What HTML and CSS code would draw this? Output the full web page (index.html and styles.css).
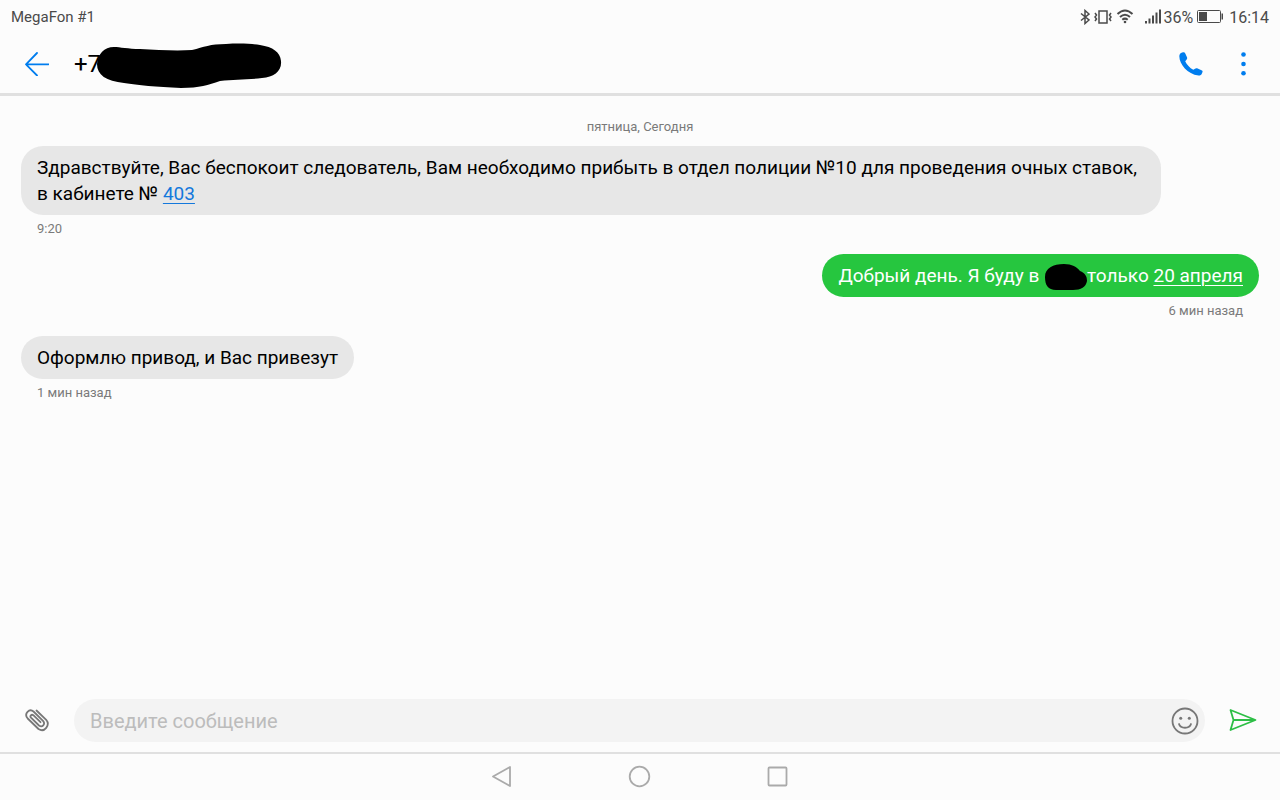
FILE: index.html
```
<!DOCTYPE html>
<html lang="ru">
<head>
  <meta charset="UTF-8">
  <meta name="viewport" content="width=device-width, initial-scale=1.0">
  <title>Сообщения</title>
  <link rel="stylesheet" href="styles.css">
</head>
<body>

  <div class="status-bar">
    <span class="operator">MegaFon #1</span>
    <div class="status-icons">
      <svg class="bluetooth" width="10" height="16" viewBox="0 0 10 16">
        <path d="M1 4.500 L9 11 L5 14.500 V1.500 L9 5 L1 11.500"/>
      </svg>
      <svg class="vibrate" width="18" height="16" viewBox="0 0 18 16">
        <rect x="5" y="2" width="8" height="12"/>
        <path d="M1 4 L2.500 6 L1 8 L2.500 10 L1 12 M17 4 L15.500 6 L17 8 L15.500 10 L17 12"/>
      </svg>
      <svg class="wifi" width="18" height="16" viewBox="0 0 18 16">
        <path d="M1.500 5 Q9 -2 16.500 5 M4 8 Q9 3.500 14 8 M6.300 10.700 Q9 8.500 11.700 10.700"/>
        <circle cx="9" cy="13" r="1.300"/>
      </svg>
      <svg class="signal" width="16" height="16" viewBox="0 0 16 16">
        <path d="M1 12 V14.500 M4.500 9.500 V14.500 M8 6.500 V14.500 M11.500 3.500 V14.500 M15 .5 V14.500"/>
      </svg>
      <span>36%</span>
      <svg class="battery" width="26" height="16" viewBox="0 0 26 16">
        <rect class="battery-case" x=".5" y="1.500" width="23" height="12" rx="1"/>
        <rect x="2" y="3" width="8" height="9"/>
        <rect x="24.500" y="4.500" width="1.500" height="6"/>
      </svg>
      <span>16:14</span>
    </div>
  </div>

  <header>
    <button type="button" class="btn-icon" aria-label="Назад">
      <svg width="24" height="24" viewBox="0 0 24 24">
        <path class="line" d="M12 1 L1 12.300 L12 23.500 M1 12.300 H23.500"/>
      </svg>
    </button>
    <div class="contact">
      <h1>+7</h1>
      <svg class="marker" width="186" height="46" viewBox="0 0 186 46">
        <path d="M1 21 C2 11 8 4 18 4 C24 4 32 6 44 6 C62 7 80 8 96 7 C108 4 114 1 130 1 C146 0 156 1 164 2 C177 4 184 9 185 18 C186 28 178 34 166 35 C150 37 138 36 124 38 C112 42 104 45 85 45 C60 44 42 42 28 40 C10 38 1 32 1 21 Z"/>
      </svg>
    </div>
    <button type="button" class="btn-icon" aria-label="Позвонить">
      <svg width="24" height="24" viewBox="0 0 24 24">
        <path d="M3.200 .5 C4.800 -.2 5.700 .2 6.300 1.400 L8 5.300 C8.400 6.400 8.200 7.200 7.300 7.900 L6.200 9.200 C7.700 12.500 10.800 15.900 14.300 17.700 L16 16.700 C16.700 16.200 17.300 16 18.100 16.300 L22.500 18.200 C23.500 18.600 23.800 19.200 23.500 20 L22.800 21.700 C22.400 22.900 21 23.700 19.500 23.500 C8.500 22 .5 12.500 .3 4.200 C.3 2.300 1.400 1 3.200 .5 Z"/>
      </svg>
    </button>
    <button type="button" class="btn-icon" aria-label="Меню">
      <svg width="24" height="24" viewBox="0 0 24 24">
        <circle cx="12.500" cy="2.500" r="2.300"/>
        <circle cx="12.500" cy="12" r="2.300"/>
        <circle cx="12.500" cy="21.300" r="2.300"/>
      </svg>
    </button>
  </header>

  <main>
    <div class="date">пятница, Сегодня</div>

    <div class="message">
      <p class="bubble">Здравствуйте, Вас беспокоит следователь, Вам необходимо прибыть в отдел полиции №10 для проведения очных ставок, в кабинете № <a href="#">403</a></p>
      <span class="time">9:20</span>
    </div>

    <div class="message sent">
      <p class="bubble">Добрый день. Я буду в <svg class="blot" width="44" height="28" viewBox="0 0 44 28"><path d="M1 14 C1 5 9 1 20 1 C28 1 33 4 36 8 C41 10 43 13 43 18 C42 24 37 27 29 27 H12 C4 27 1 22 1 14 Z"/></svg>только <a href="#">20 апреля</a></p>
      <span class="time">6 мин назад</span>
    </div>

    <div class="message">
      <p class="bubble">Оформлю привод, и Вас привезут</p>
      <span class="time">1 мин назад</span>
    </div>
  </main>

  <form class="composer">
    <button type="button" class="btn-icon attach" aria-label="Прикрепить">
      <svg width="24" height="24" viewBox="0 0 24 24">
        <path class="line" d="M11.500 1.500 L21.200 10.800 C25.500 16 19.500 24 13.500 20 L2.700 9.500 C-1.500 4.500 4.500 -1 8.500 2.500 L18 11.800 C20.800 15 17.200 19 14 16.500 L6 8.700 C4.500 7 6.500 4.800 8.300 6.200 L15.500 13.200"/>
      </svg>
    </button>
    <div class="field">
      <input type="text" placeholder="Введите сообщение" aria-label="Введите сообщение">
      <button type="button" class="btn-icon" aria-label="Смайлы">
        <svg width="28" height="28" viewBox="0 0 28 28">
          <circle class="line" cx="14" cy="14" r="12.500"/>
          <path class="line" d="M8 17 C9.500 22 18.500 22 20 17"/>
          <circle cx="9.700" cy="11.300" r="1.500"/>
          <circle cx="18.300" cy="11.300" r="1.500"/>
        </svg>
      </button>
    </div>
    <button type="submit" class="btn-icon send" aria-label="Отправить">
      <svg width="28" height="24" viewBox="0 0 28 24">
        <path class="line" d="M1.500 1 L26.500 11 L1.500 21 L4.500 11 Z M4.500 11 H26"/>
      </svg>
    </button>
  </form>

  <nav>
    <button type="button" class="btn-icon" aria-label="Назад">
      <svg width="24" height="24" viewBox="0 0 24 24"><path class="line" d="M20 2 V21 L3 11.500 Z"/></svg>
    </button>
    <button type="button" class="btn-icon" aria-label="Домой">
      <svg width="24" height="24" viewBox="0 0 24 24"><circle class="line" cx="11.500" cy="11.500" r="9.800"/></svg>
    </button>
    <button type="button" class="btn-icon" aria-label="Недавние">
      <svg width="24" height="24" viewBox="0 0 24 24"><rect class="line" x="2.500" y="2.500" width="18" height="18" rx="1"/></svg>
    </button>
  </nav>

</body>
</html>
```
FILE: styles.css
```
* {
  box-sizing: border-box;
}

body {
  font-family: Roboto, "Noto Sans", sans-serif;
  background: #fcfcfc;
  color: #000;
  margin: 0;
  min-height: 100vh;
  display: flex;
  flex-direction: column;
}

svg {
  display: block;
  fill: currentColor;
}

.line {
  fill: none;
  stroke: currentColor;
  stroke-width: 1.8;
  stroke-linejoin: round;
  stroke-linecap: round;
}

.btn-icon {
  background: none;
  border: none;
  padding: 0;
  color: inherit;
  cursor: pointer;
}

/* status bar */
.status-bar {
  display: flex;
  justify-content: space-between;
  align-items: center;
  height: 34px;
  padding: 0 11px;
  font-size: 16px;
  color: #4a4a4a;
}

.operator {
  font-size: 15px;
}

.status-icons {
  display: flex;
  align-items: center;
}

.bluetooth,
.vibrate,
.wifi,
.signal {
  fill: none;
  stroke: currentColor;
  stroke-width: 1.5;
}

.signal,
.wifi {
  stroke-width: 2;
}

.wifi circle {
  fill: currentColor;
  stroke: none;
}

.bluetooth,
.vibrate {
  margin-right: 4px;
}

.wifi {
  margin-right: 11px;
}

.signal {
  margin-right: 2px;
}

.battery {
  margin: 0 6px 0 4px;
}

.battery-case {
  fill: none;
  stroke: currentColor;
}

/* header */
header {
  display: flex;
  align-items: center;
  gap: 28px;
  height: 62px;
  padding: 0 25px;
  border-bottom: 3px solid #e0e0e0;
  color: #007dee;
}

.contact {
  position: relative;
  flex: 1;
  margin-left: -3px;
  color: #000;
}

h1 {
  font-size: 24px;
  font-weight: 400;
  line-height: 28px;
  margin: 0;
}

.marker {
  position: absolute;
  left: 22px;
  top: -7px;
}

/* messages */
main {
  flex: 1;
  padding: 21px;
}

.date,
.time {
  font-size: 13px;
  line-height: 20px;
  color: #7a7a7a;
}

.date {
  text-align: center;
  margin-bottom: 9px;
}

.message {
  display: flex;
  flex-direction: column;
  align-items: flex-start;
  margin-bottom: 15px;
}

.bubble {
  max-width: 1140px;
  margin: 0 0 4px;
  padding: 9px 16px 8px;
  border-radius: 22px;
  background: #e7e7e7;
  font-size: 19px;
  line-height: 26px;
}

.bubble a {
  color: #1478dc;
  text-decoration-thickness: 1px;
  text-underline-offset: 3px;
}

.time {
  padding: 0 16px;
}

.sent {
  align-items: flex-end;
}

.sent .bubble {
  background: #26c63f;
  color: #fff;
}

.sent .bubble a {
  color: #fff;
}

.blot {
  display: inline-block;
  vertical-align: middle;
  margin: -4px -1px -4px 0;
  fill: #000;
}

/* composer */
.composer {
  display: flex;
  align-items: center;
  padding: 0 23px 10px 25px;
}

.attach {
  color: #777;
}

.field {
  flex: 1;
  display: flex;
  align-items: center;
  height: 43px;
  margin: 0 24px 0 25px;
  padding: 0 6px 0 16px;
  border-radius: 22px;
  background: #f3f3f3;
  color: #777;
}

.field input {
  flex: 1;
  border: none;
  outline: none;
  padding: 0;
  background: none;
  font-family: inherit;
  font-size: 20px;
}

.field input::placeholder {
  color: #bcbcbc;
}

.send {
  color: #2dbe46;
}

/* navigation */
nav {
  display: flex;
  justify-content: center;
  align-items: center;
  gap: 114px;
  height: 48px;
  border-top: 2px solid #e0e0e0;
  color: #aaa;
}
```
